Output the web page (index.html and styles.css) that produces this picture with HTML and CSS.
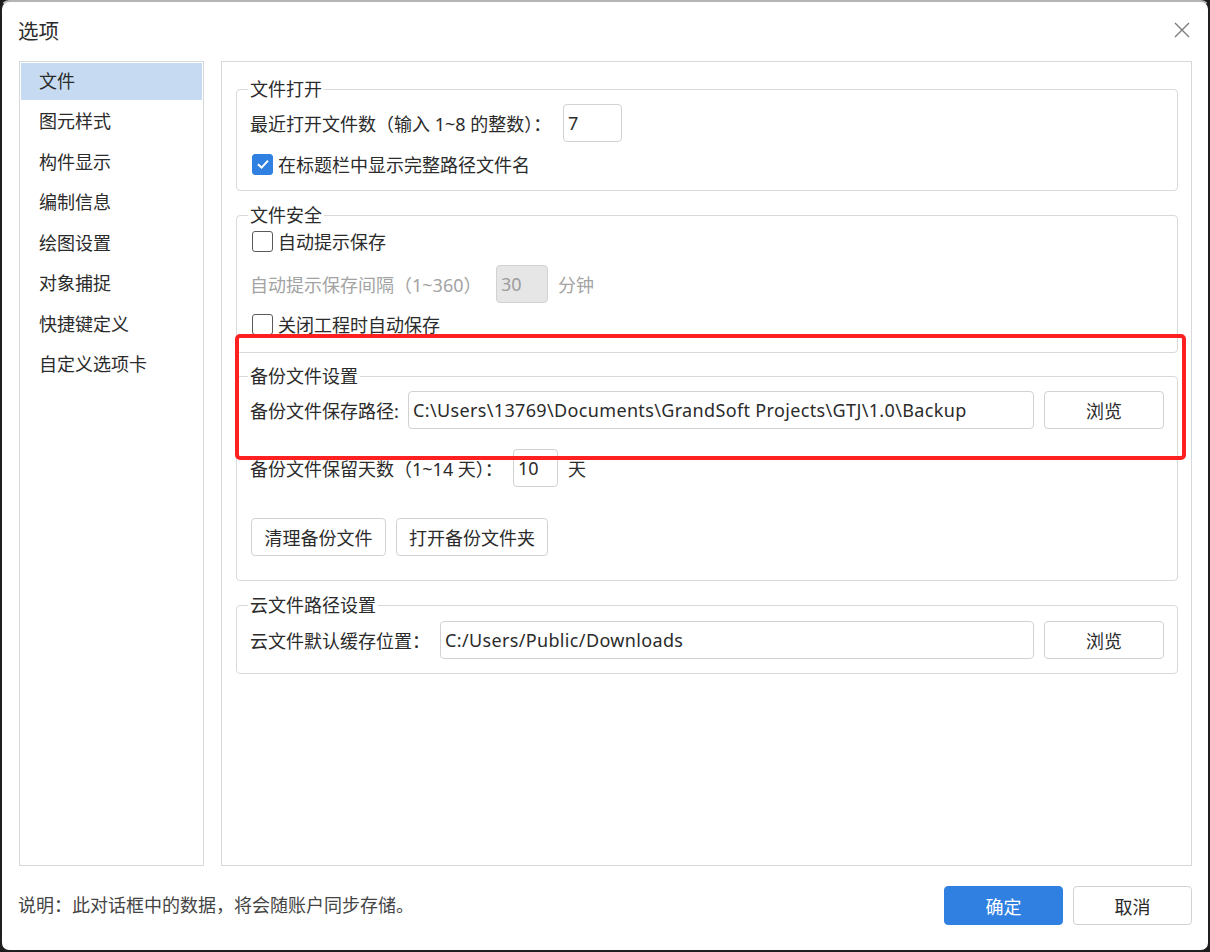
FILE: index.html
```html
<!DOCTYPE html>
<html lang="zh-CN">
<head>
  <meta charset="UTF-8">
  <title>选项</title>
  <link rel="stylesheet" href="styles.css">
</head>
<body>
  <div class="dialog">
    <!-- title bar -->
    <div class="titlebar">
      <span class="title">选项</span>
      <svg class="close" width="16" height="16" viewBox="0 0 16 16">
        <path d="M1 1L15 15M15 1L1 15" stroke="#7c7c7c" stroke-width="1.4" fill="none"/>
      </svg>
    </div>

    <div class="body">
      <!-- left navigation -->
      <ul class="nav">
        <li class="active">文件</li>
        <li>图元样式</li>
        <li>构件显示</li>
        <li>编制信息</li>
        <li>绘图设置</li>
        <li>对象捕捉</li>
        <li>快捷键定义</li>
        <li>自定义选项卡</li>
      </ul>

      <!-- settings panel -->
      <div class="panel">
        <fieldset class="group group-open">
          <legend>文件打开</legend>
          <div class="row">
            <span class="label label-recent">最近打开文件数（输入 1~8 的整数）：</span>
            <input class="field field-recent" type="text" value="7" readonly>
          </div>
          <label class="check-row check-first">
            <span class="checkbox checked">
              <svg width="14" height="14" viewBox="0 0 14 14"><path d="M2 7.2L5.6 10.6L12 3.6" stroke="#fff" stroke-width="2" fill="none"/></svg>
            </span>
            在标题栏中显示完整路径文件名
          </label>
        </fieldset>

        <fieldset class="group group-safe">
          <legend>文件安全</legend>
          <label class="check-row">
            <span class="checkbox"></span>
            自动提示保存
          </label>
          <div class="row row-interval disabled">
            <span class="label label-interval">自动提示保存间隔（1~360）</span>
            <input class="field field-interval" type="text" value="30" readonly>
            <span class="unit unit-min">分钟</span>
          </div>
          <label class="check-row check-close">
            <span class="checkbox"></span>
            关闭工程时自动保存
          </label>
        </fieldset>

        <fieldset class="group group-backup">
          <legend>备份文件设置</legend>
          <div class="row">
            <span class="label label-path">备份文件保存路径:</span>
            <input class="field field-path" type="text" value="C:\Users\13769\Documents\GrandSoft Projects\GTJ\1.0\Backup" readonly>
            <button class="btn btn-browse">浏览</button>
          </div>
          <div class="row row-days">
            <span class="label label-days">备份文件保留天数（1~14 天）：</span>
            <input class="field field-days" type="text" value="10" readonly>
            <span class="unit">天</span>
          </div>
          <div class="row row-actions">
            <button class="btn btn-clean">清理备份文件</button>
            <button class="btn btn-open">打开备份文件夹</button>
          </div>
        </fieldset>

        <fieldset class="group group-cloud">
          <legend>云文件路径设置</legend>
          <div class="row">
            <span class="label label-cloud">云文件默认缓存位置：</span>
            <input class="field field-path" type="text" value="C:/Users/Public/Downloads" readonly>
            <button class="btn btn-browse">浏览</button>
          </div>
        </fieldset>

        <!-- red annotation frame -->
        <div class="highlight"></div>
      </div>
    </div>

    <!-- footer -->
    <div class="footer">
      <span class="note">说明：此对话框中的数据，将会随账户同步存储。</span>
      <div class="actions">
        <button class="btn btn-primary">确定</button>
        <button class="btn btn-footer">取消</button>
      </div>
    </div>
  </div>
</body>
</html>
```

FILE: styles.css
```css
* {
  box-sizing: border-box;
}

body {
  margin: 0;
  background: #1c1c1c;
  font-family: "Noto Sans", "Noto Sans CJK SC", sans-serif;
  font-size: 18px;
  color: #2b2b2b;
}

:root {
  --line: #d6d8dc;
  --field-line: #d2d2d2;
  --blue: #2f80e1;
  --muted: #a3a3a3;
}

.dialog {
  width: 1210px;
  height: 952px;
  background: #fff;
  border: 2px solid #1f1f1f;
  border-top-color: #b4b4b4;
  border-radius: 9px;
  display: flex;
  flex-direction: column;
}

/* title */
.titlebar {
  height: 59px;
  flex: none;
  display: flex;
  align-items: center;
  justify-content: space-between;
  padding: 0 18px 4px 16px;
}

.title {
  font-size: 20.5px;
}

.close {
  display: block;
}

/* body */
.body {
  flex: none;
  height: 805px;
  display: flex;
  padding: 0 16px 0 17px;
  gap: 17px;
}

.nav {
  width: 185px;
  flex: none;
  margin: 0;
  padding: 1px;
  list-style: none;
  border: 1px solid var(--line);
}

.nav li {
  height: 37px;
  line-height: 37px;
  margin-bottom: 3.45px;
  padding-left: 18px;
}

.nav li.active {
  background: #c6dbf1;
}

.panel {
  flex: 1;
  position: relative;
  border: 1px solid var(--line);
  padding: 0 13px 0 14px;
}

/* group boxes */
.group {
  margin: 0;
  border: 1px solid #d9d9d9;
  border-radius: 4px;
  padding: 0 13px 14px 13px;
}

.group legend {
  line-height: 22px;
  padding: 0 2px;
  margin-left: -2px;
}

.group-open {
  margin-top: 16px;
  padding-top: 4px;
}

.group-safe {
  margin-top: 13px;
  padding-top: 3px;
  padding-bottom: 16px;
}

.group-backup {
  margin-top: 12px;
  padding-top: 4px;
  padding-bottom: 24px;
}

.group-cloud {
  margin-top: 13px;
  padding-top: 5px;
}

.row {
  display: flex;
  align-items: center;
  height: 38px;
}

.label {
  flex: none;
  white-space: nowrap;
}

.label-recent { width: 313px; }
.label-interval { width: 246px; }
.label-path { width: 158px; }
.label-days { width: 263px; }
.label-cloud { width: 190px; }

.field {
  height: 38px;
  border: 1px solid var(--field-line);
  border-radius: 4px;
  padding: 0 4px;
  font: inherit;
  color: #2b2b2b;
  background: #fff;
  outline: none;
}

.field-recent { width: 59px; }
.field-interval { width: 52px; }
.field-days { width: 45px; }

.field-path {
  flex: 1;
  min-width: 0;
  letter-spacing: 0.35px;
}

.disabled {
  color: var(--muted);
}

.disabled .field {
  background: #e6e6e6;
  color: #9c9c9c;
}

.unit {
  margin-left: 10px;
}

.check-row {
  display: flex;
  align-items: center;
  height: 24px;
}

.check-first { margin-top: 10px; }
.row-interval { margin-top: 12px; }
.check-close { margin-top: 9px; }
.row-days { margin-top: 20px; }
.row-actions { margin-top: 31px; gap: 10px; padding-left: 1px; }

.checkbox {
  width: 21px;
  height: 21px;
  margin: 0 5px 0 2px;
  border: 1.5px solid #5a5a5a;
  border-radius: 3px;
  display: flex;
  align-items: center;
  justify-content: center;
}

.checkbox.checked {
  background: var(--blue);
  border-color: var(--blue);
}

/* buttons */
.btn {
  height: 38px;
  font: inherit;
  color: #2b2b2b;
  background: #fff;
  border: 1px solid var(--field-line);
  border-radius: 4px;
  padding: 0;
}

.btn-browse {
  width: 120px;
  margin-left: 10px;
}

.btn-clean { width: 135px; }
.btn-open { width: 152px; }

.highlight {
  position: absolute;
  left: 13px;
  top: 272px;
  width: 951px;
  height: 126px;
  border: 4.5px solid #ff2121;
  border-radius: 5px;
}

/* footer */
.footer {
  flex: 1;
  display: flex;
  justify-content: space-between;
  align-items: flex-start;
  padding: 20px 16px 0 16px;
}

.note {
  line-height: 39px;
  color: #444;
}

.actions {
  display: flex;
  gap: 10px;
}

.btn-primary,
.btn-footer {
  width: 119px;
  height: 39px;
}

.btn-primary {
  background: var(--blue);
  border-color: var(--blue);
  color: #fff;
}
```
